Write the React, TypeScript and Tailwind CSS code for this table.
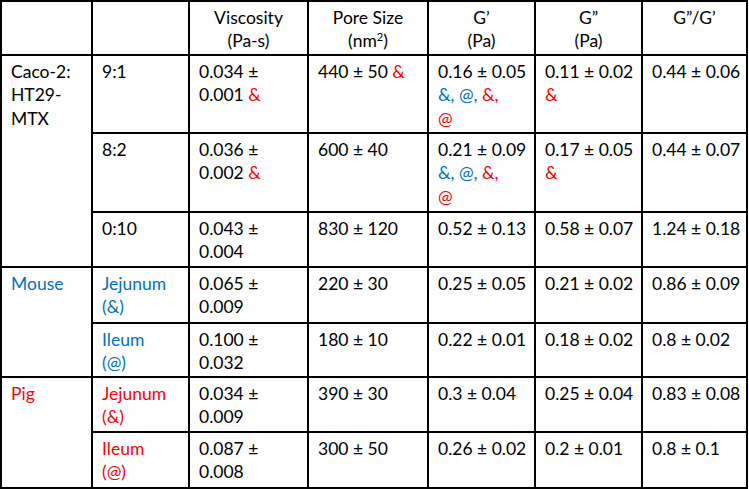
import type { ReactNode } from "react"

const BLUE = "text-[#0070c0]"
const RED = "text-[#ff0000]"

function Cell({
  children,
  className = "",
}: {
  children?: ReactNode
  className?: string
}) {
  return (
    <div className={`bg-white pt-[4px] pl-[9px] whitespace-nowrap ${className}`}>
      {children}
    </div>
  )
}

function Head({ children }: { children?: ReactNode }) {
  return <div className="bg-white pt-[4px] text-center whitespace-nowrap">{children}</div>
}

const R = ({ children }: { children: ReactNode }) => <span className={RED}>{children}</span>
const B = ({ children }: { children: ReactNode }) => <span className={BLUE}>{children}</span>

export default function App() {
  return (
    <div
      className="grid w-[748px] grid-cols-[89px_95px_117px_118px_105px_105px_103px] grid-rows-[52px_76px_77px_53px_54px_52px_53px_54px] gap-[2px] bg-black p-[2px] text-[17.5px] leading-[23.3px] text-black"
      style={{ fontFamily: "Lato, 'Noto Sans', sans-serif" }}
    >
      {/* header */}
      <div className="bg-white" />
      <div className="bg-white" />
      <Head>
        Viscosity
        <br />
        (Pa-s)
      </Head>
      <Head>
        Pore Size
        <br />
        (nm<span className="relative -top-[6px] text-[11px] leading-none">2</span>)
      </Head>
      <Head>
        G’
        <br />
        (Pa)
      </Head>
      <Head>
        G”
        <br />
        (Pa)
      </Head>
      <Head>G”/G’</Head>

      {/* Caco-2 */}
      <Cell className="row-span-3">
        Caco-2:
        <br />
        HT29-
        <br />
        MTX
      </Cell>
      <Cell>9:1</Cell>
      <Cell>
        0.034 ±
        <br />
        0.001 <R>&amp;</R>
      </Cell>
      <Cell>
        440 ± 50 <R>&amp;</R>
      </Cell>
      <Cell>
        0.16 ± 0.05
        <br />
        <B>&amp;, @, </B>
        <R>&amp;,</R>
        <br />
        <R>@</R>
      </Cell>
      <Cell>
        0.11 ± 0.02
        <br />
        <R>&amp;</R>
      </Cell>
      <Cell>0.44 ± 0.06</Cell>

      <Cell>8:2</Cell>
      <Cell>
        0.036 ±
        <br />
        0.002 <R>&amp;</R>
      </Cell>
      <Cell>600 ± 40</Cell>
      <Cell>
        0.21 ± 0.09
        <br />
        <B>&amp;, @, </B>
        <R>&amp;,</R>
        <br />
        <R>@</R>
      </Cell>
      <Cell>
        0.17 ± 0.05
        <br />
        <R>&amp;</R>
      </Cell>
      <Cell>0.44 ± 0.07</Cell>

      <Cell>0:10</Cell>
      <Cell>
        0.043 ±
        <br />
        0.004
      </Cell>
      <Cell>830 ± 120</Cell>
      <Cell>0.52 ± 0.13</Cell>
      <Cell>0.58 ± 0.07</Cell>
      <Cell>1.24 ± 0.18</Cell>

      {/* Mouse */}
      <Cell className={`row-span-2 ${BLUE}`}>Mouse</Cell>
      <Cell className={BLUE}>
        Jejunum
        <br />
        (&amp;)
      </Cell>
      <Cell>
        0.065 ±
        <br />
        0.009
      </Cell>
      <Cell>220 ± 30</Cell>
      <Cell>0.25 ± 0.05</Cell>
      <Cell>0.21 ± 0.02</Cell>
      <Cell>0.86 ± 0.09</Cell>

      <Cell className={BLUE}>
        Ileum
        <br />
        (@)
      </Cell>
      <Cell>
        0.100 ±
        <br />
        0.032
      </Cell>
      <Cell>180 ± 10</Cell>
      <Cell>0.22 ± 0.01</Cell>
      <Cell>0.18 ± 0.02</Cell>
      <Cell>0.8 ± 0.02</Cell>

      {/* Pig */}
      <Cell className={`row-span-2 ${RED}`}>Pig</Cell>
      <Cell className={RED}>
        Jejunum
        <br />
        (&amp;)
      </Cell>
      <Cell>
        0.034 ±
        <br />
        0.009
      </Cell>
      <Cell>390 ± 30</Cell>
      <Cell>0.3 ± 0.04</Cell>
      <Cell>0.25 ± 0.04</Cell>
      <Cell>0.83 ± 0.08</Cell>

      <Cell className={RED}>
        Ileum
        <br />
        (@)
      </Cell>
      <Cell>
        0.087 ±
        <br />
        0.008
      </Cell>
      <Cell>300 ± 50</Cell>
      <Cell>0.26 ± 0.02</Cell>
      <Cell>0.2 ± 0.01</Cell>
      <Cell>0.8 ± 0.1</Cell>
    </div>
  )
}
